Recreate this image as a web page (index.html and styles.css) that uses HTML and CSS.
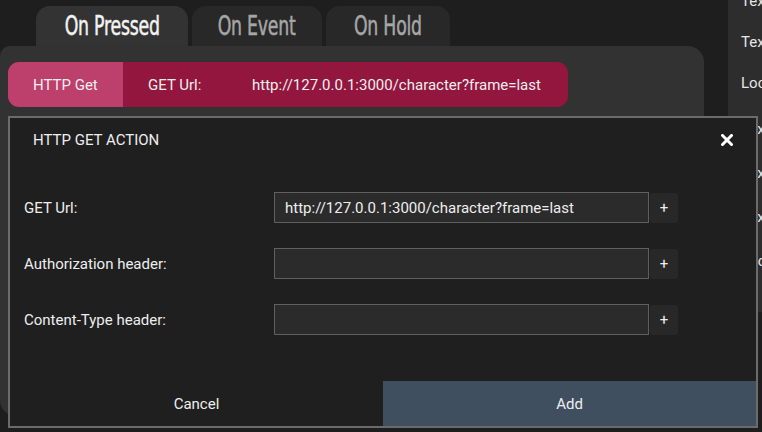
FILE: index.html
```html
<!DOCTYPE html>
<html>
<head>
<meta charset="utf-8">
<link rel="stylesheet" href="styles.css">
</head>
<body>
<div class="app">
  <div class="main">
    <div class="tabs">
      <div class="tab active"><span class="tab-text">On Pressed</span></div>
      <div class="tab"><span class="tab-text">On Event</span></div>
      <div class="tab"><span class="tab-text">On Hold</span></div>
    </div>
    <div class="panel">
      <div class="action-row">
        <div class="action-type">HTTP Get</div>
        <div class="action-body">
          <span class="action-key">GET Url:</span>
          <span class="action-val">http://127.0.0.1:3000/character?frame=last</span>
        </div>
      </div>
    </div>
  </div>
  <div class="sidebar">
    <div class="group g1">
      <div class="item">Text</div>
      <div class="item">Text</div>
      <div class="item">Location</div>
    </div>
    <div class="group g2">
      <div class="item">Text</div>
      <div class="item">Text</div>
      <div class="item">Text</div>
      <div class="item">Location</div>
    </div>
  </div>
</div>

<div class="modal">
  <div class="modal-head">
    <span class="modal-title">HTTP GET ACTION</span>
    <svg class="close" width="12" height="12" viewBox="0 0 12 12"><path d="M1.5 1.5 L10.5 10.5 M10.5 1.5 L1.5 10.5" stroke="#fff" stroke-width="3" stroke-linecap="square"/></svg>
  </div>
  <div class="form">
    <div class="row">
      <label class="label">GET Url:</label>
      <div class="input">http://127.0.0.1:3000/character?frame=last</div>
      <div class="plus">+</div>
    </div>
    <div class="row">
      <label class="label">Authorization header:</label>
      <div class="input"></div>
      <div class="plus">+</div>
    </div>
    <div class="row">
      <label class="label">Content-Type header:</label>
      <div class="input"></div>
      <div class="plus">+</div>
    </div>
  </div>
  <div class="footer">
    <div class="btn cancel">Cancel</div>
    <div class="btn add">Add</div>
  </div>
</div>
</body>
</html>
```

FILE: styles.css
```css
* { box-sizing: border-box; }
html, body {
  margin: 0;
  padding: 0;
}
body {
  width: 762px;
  height: 432px;
  overflow: hidden;
  background: #1e1e1e;
  font-family: Roboto, "Noto Sans", sans-serif;
  font-size: 15px;
  color: #eeeeee;
  position: relative;
}
.app {
  display: flex;
  height: 432px;
}
.main {
  width: 704px;
  display: flex;
  flex-direction: column;
}
.tabs {
  display: flex;
  gap: 4px;
  padding: 6px 0 0 36px;
  height: 46px;
}
.tab {
  height: 40px;
  border-radius: 14px 14px 0 0;
  background: #282828;
  color: #a6a6a6;
  font-family: "DejaVu Sans Condensed", "DejaVu Sans", sans-serif;
  font-stretch: condensed;
  font-size: 26px;
  display: flex;
  align-items: center;
  justify-content: center;
  width: 130px;
  white-space: nowrap;
}
.tab-text {
  display: inline-block;
  transform: scale(0.74, 1);
  letter-spacing: -0.3px;
  -webkit-text-stroke: 0.5px currentColor;
}
.tab.active {
  width: 152px;
  background: #333333;
  color: #f2f2f2;
}
.tab + .tab + .tab { width: 124px; }
.panel {
  background: #323232;
  height: 370px;
  border-radius: 10px 16px 0 16px;
  padding: 16px 8px;
}
.action-row {
  display: flex;
  width: 560px;
  height: 45px;
  border-radius: 11px;
  overflow: hidden;
  background: #93163f;
}
.action-type {
  width: 115px;
  background: #bd3f6c;
  display: flex;
  align-items: center;
  padding-left: 25px;
}
.action-body {
  display: flex;
  align-items: center;
  padding-left: 25px;
}
.action-key { width: 104px; }
.sidebar {
  margin-left: 24px;
  flex: 1;
  height: 312px;
  background: #2d2d2d;
  padding-left: 13px;
  overflow: hidden;
  white-space: nowrap;
}
.group { display: flex; flex-direction: column; }
.g1 { margin-top: -7px; gap: 24px; }
.g2 { margin-top: 29px; gap: 27px; }
.item { height: 17px; line-height: 17px; color: #e6e6e6; }

.modal {
  position: absolute;
  left: 8px;
  top: 116px;
  width: 750px;
  height: 312px;
  border: 2px solid #6b6b6b;
  background: #1f1f1f;
  display: flex;
  flex-direction: column;
}
.modal-head {
  height: 44px;
  display: flex;
  align-items: center;
  justify-content: space-between;
  padding: 0 23px 0 23px;
}
.form {
  padding: 30px 0 0 14px;
  display: flex;
  flex-direction: column;
  gap: 25px;
}
.row {
  display: flex;
  align-items: center;
  height: 31px;
}
.label { width: 250px; }
.input {
  width: 375px;
  height: 31px;
  background: #2b2b2b;
  border: 1px solid #606060;
  padding-left: 10px;
  display: flex;
  align-items: center;
}
.plus {
  margin-left: 1px;
  width: 28px;
  height: 30px;
  background: #282828;
  border-radius: 3px;
  display: flex;
  align-items: center;
  justify-content: center;
  font-size: 15px;
}
.footer {
  margin-top: auto;
  display: flex;
  height: 45px;
}
.btn {
  flex: 1;
  display: flex;
  align-items: center;
  justify-content: center;
}
.add { background: #3f4f60; }
```
